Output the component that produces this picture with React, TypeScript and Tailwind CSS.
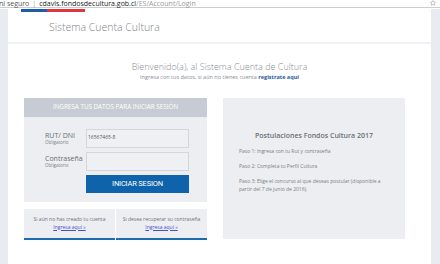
import { Star } from "lucide-react";

const font = { fontFamily: '"Open Sans", "Liberation Sans", sans-serif' };

function Field({ label, value, top }: { label: string; value?: string; top?: boolean }) {
    return (
        <div className={`flex items-center ${top ? "" : "mt-[4px]"}`}>
            <div className="w-[41px] leading-none">
                <div className="text-[7px] text-[#6b6f75]">{label}</div>
                <div className="text-[4.5px] text-[#7c8086] mt-[1px]">Obligatorio</div>
            </div>
            <div className="w-[103px] h-[19px] bg-[#eef0f3] border border-[#d3d6db] flex items-center pl-[1px] text-[5px] text-[#555]">
                {value}
            </div>
        </div>
    );
}

export default function App() {
    return (
        <div className="w-[440px] h-[264px] overflow-hidden bg-white flex flex-col" style={font}>
            {/* barra del navegador */}
            <div className="h-[8px] border-b border-[#c9ccd1] flex items-end justify-between text-[7px] leading-none text-[#555]">
                <div className="flex items-center gap-[3px] -ml-[1px]">
                    <span>ni seguro</span>
                    <span className="text-[#999]">|</span>
                    <span>
                        <span className="text-[#222]">cdavis.fondosdecultura.gob.cl</span>
                        <span className="text-[#999]">/ES/Account/Login</span>
                    </span>
                </div>
                <Star className="w-[6px] h-[6px] mr-[4px] mb-[1px] text-[#888]" strokeWidth={2} />
            </div>

            <div className="flex-1 flex pt-[1px]">
                <div className="w-[8px] bg-[#e8ebef]" />
                <div className="w-[423px] bg-white">
                    {/* encabezado */}
                    <div className="h-[35px] border-b-[2px] border-[#eef1f5] pl-[13px]">
                        <div className="flex h-[3px] w-[64px]">
                            <div className="w-[26px] bg-[#1b5ea8]" />
                            <div className="flex-1 bg-[#e0343e]" />
                        </div>
                        <div className="pl-[28px] mt-[10px] text-[10.5px] font-light text-[#808489] leading-none">
                            Sistema Cuenta Cultura
                        </div>
                    </div>

                    {/* bienvenida */}
                    <div className="text-center mt-[18px] leading-none">
                        <div className="text-[9px] font-light text-[#8a8e94]">Bienvenido(a), al Sistema Cuenta de Cultura</div>
                        <div className="text-[5.5px] text-[#8a8e94] mt-[4px]">
                            Ingresa con tus datos, si aún no tienes cuenta{" "}
                            <span className="font-bold text-[#1f5aa0]">registrate aqui</span>
                        </div>
                    </div>

                    <div className="flex pl-[16px] gap-[16px] mt-[17px]">
                        {/* panel de ingreso */}
                        <div className="w-[183px]">
                            <div className="h-[19px] bg-[#c7ccd4] flex items-center justify-center text-[6.3px] text-white">
                                INGRESA TUS DATOS PARA INICIAR SESIÓN
                            </div>
                            <div className="bg-[#eceef2] h-[85px] pt-[12px] pl-[21px]">
                                <Field label="RUT/ DNI" value="16567465-8" top />
                                <Field label="Contraseña" />
                                <div className="ml-[41px] mt-[4px] w-[103px] h-[18px] bg-[#0f63aa] flex items-center justify-center text-white text-[7.5px] tracking-tight" style={{ fontFamily: "Roboto, sans-serif" }}>
                                    INICIAR SESION
                                </div>
                            </div>
                            <div className="flex mt-[7px] gap-px">
                                <div className="flex-1 h-[31px] bg-[#eceef2] border-b-[2px] border-[#1a6bb0] text-center text-[5px] leading-none text-[#6d7177] pt-[8px]">
                                    <div>Si aún no has creado tu cuenta</div>
                                    <div className="mt-[3px] text-[#4a4fd0] underline">Ingresa aquí »</div>
                                </div>
                                <div className="flex-1 h-[31px] bg-[#eceef2] border-b-[2px] border-[#1a6bb0] text-center text-[5px] leading-none text-[#6d7177] pt-[8px]">
                                    <div>Si desea recuperar su contraseña</div>
                                    <div className="mt-[3px] text-[#4a4fd0] underline">Ingresa aquí »</div>
                                </div>
                            </div>
                        </div>

                        {/* panel de postulaciones */}
                        <div className="w-[182px] h-[141px] bg-[#eceef2] px-[16px] pt-[34px]">
                            <div className="text-center text-[7px] font-semibold text-[#6a6e74] leading-none">
                                Postulaciones Fondos Cultura 2017
                            </div>
                            <div className="text-[5px] text-[#7a7e84] leading-[8px] mt-[8px]">
                                <p>Paso 1: Ingresa con tu Rut y contraseña</p>
                                <p className="mt-[7px]">Paso 2: Completa tu Perfil Cultura</p>
                                <p className="mt-[7px]">Paso 3: Elige el concurso al que deseas postular (disponible a partir del 7 de junio de 2016).</p>
                            </div>
                        </div>
                    </div>
                </div>
                <div className="flex-1 bg-[#e8ebef]" />
            </div>
        </div>
    );
}
